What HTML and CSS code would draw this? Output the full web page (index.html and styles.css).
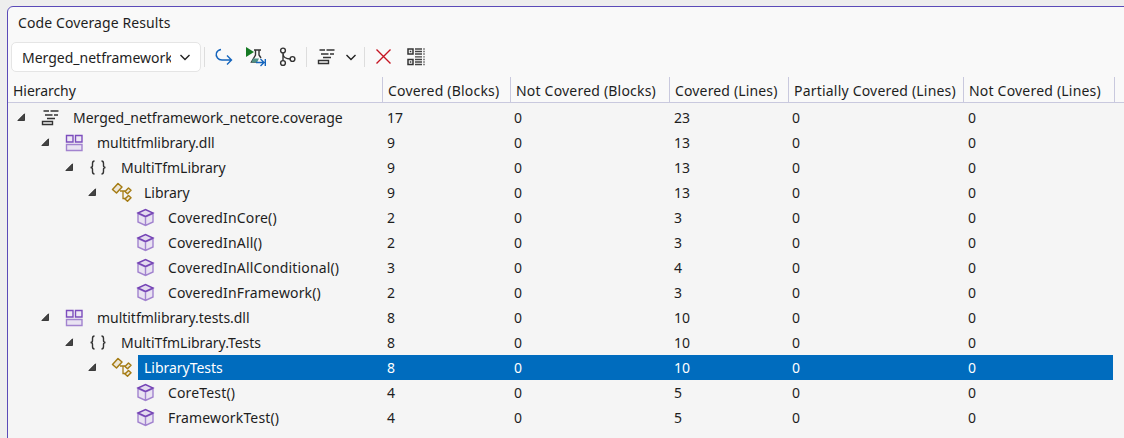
FILE: index.html
```html
<!DOCTYPE html>
<html lang="en">
<head>
<meta charset="utf-8">
<title>Code Coverage Results</title>
<link rel="stylesheet" href="styles.css">
</head>
<body>
<svg class="defs" width="0" height="0">
  <symbol id="report" viewBox="0 0 20 20"><path d="M3.500 3h5.500M10.500 3h8M5 7h7.500M14 7h4M7 10.500h8M2.500 13.500h10v3h-10z" fill="none" stroke="#333" stroke-width="1.400"/></symbol>
  <symbol id="module" viewBox="0 0 20 20"><path d="M2.500 2.500h6.500v6.500h-6.500zM11.500 2.500h6.500v6.500h-6.500z" fill="#eee9f5" stroke="#7c4dbd" stroke-width="1.400"/><path d="M2.500 11.500h15.500v6h-15.500z" fill="#e9e3f2" stroke="#a283cf" stroke-width="1.400"/></symbol>
  <symbol id="namespace" viewBox="0 0 20 20"><path d="M6.500 3C4.500 3 4.500 4 4.500 5.500V7.500Q4.500 9.500 2.500 9.500Q4.500 9.500 4.500 11.500V13.500C4.500 15 4.500 16 6.500 16M13.500 3C15.500 3 15.500 4 15.500 5.500V7.500Q15.500 9.500 17.500 9.500Q15.500 9.500 15.500 11.500V13.500C15.500 15 15.500 16 13.500 16" fill="none" stroke="#333" stroke-width="1.400"/></symbol>
  <symbol id="class" viewBox="0 0 20 20" overflow="visible"><path d="M9 8h5M12 8v7.500h3" fill="none" stroke="#a57c14" stroke-width="1.300"/><path d="M1.500 6.500l5.500-6 4 3.500-5.500 6zM14 8.500l3.500-3.500 2.500 2.200-3.500 3.500zM14 16l3.500-3.500 2.500 2.200-3.500 3.500z" fill="#eee7d8" stroke="#a57c14" stroke-width="1.500" stroke-linejoin="round"/></symbol>
  <symbol id="method" viewBox="0 0 20 20"><path d="M3 5.500l7.500 3.500 7.500-3.500v8.500l-7.500 3.500-7.500-3.500zM10.500 9v8.500" fill="#e9e3f2" stroke="#a283cf" stroke-width="1.400"/><path d="M3 5l7.500-3.500 7.500 3.500-7.500 3.500z" fill="#e4dbef" stroke="#7443b5" stroke-width="1.400"/></symbol>
</svg>
<main class="panel">
  <h1 class="title">Code Coverage Results</h1>
  <div class="toolbar">
    <div class="combo"><span class="combo-text">Merged_netframework</span><svg class="chevron" viewBox="0 0 12 12"><path d="M1.500 4l4.500 4.500 4.500-4.500" fill="none" stroke="#222" stroke-width="1.400"/></svg></div>
    <i class="sep sep-a"></i>
    <svg class="tool t-import" viewBox="0 0 20 20"><path d="M7 2.500C2 3.500 1 8 3.500 11Q5 13 8 13H17.500M13 8.500l4.500 4.500-4.500 4.500" fill="none" stroke="#1565bd" stroke-width="1.400"/></svg>
    <svg class="tool t-run" viewBox="0 0 20 20" overflow="visible"><path d="M8 3h7M9.500 3v5l-4 7h5M13 3v5l2 3" fill="none" stroke="#333" stroke-width="1.400"/><path d="M7 11.500h6l-2 4h-5.500z" fill="#4f9185"/><path d="M0 0v10l8-5z" fill="#167a24"/><path d="M10 15.500h8M14.500 12l3.500 3.500-3.500 3.500M19.300 12v7" fill="none" stroke="#1565bd" stroke-width="1.400"/></svg>
    <svg class="tool t-merge" viewBox="0 0 20 20"><g fill="#f9f9f9" stroke="#333" stroke-width="1.400"><path d="M5 5v9M5 6c0 5 3 6 8 6" fill="none"/><circle cx="5" cy="3.500" r="2.400"/><circle cx="5" cy="16" r="2.400"/><circle cx="14.500" cy="12" r="2.400"/></g></svg>
    <i class="sep sep-b"></i>
    <svg class="tool t-report"><use href="#report"/></svg>
    <svg class="chevron t-chevron" viewBox="0 0 12 12"><path d="M1.500 4l4.500 4.500 4.500-4.500" fill="none" stroke="#222" stroke-width="1.400"/></svg>
    <i class="sep sep-c"></i>
    <svg class="tool t-remove" viewBox="0 0 20 20"><path d="M3.500 2.500l14 14M17.500 2.500L3.500 16.500" fill="none" stroke="#c51422" stroke-width="1.400"/></svg>
    <svg class="tool t-columns" viewBox="0 0 20 20"><path d="M2 2h5v5h-5zM2 12.500h5v5h-5z" fill="none" stroke="#333" stroke-width="1.500"/><path d="M3.800 3.800h1.500v1.500h-1.500zM3.800 14.300h1.500v1.500h-1.500z" fill="#333"/><path d="M9 2h7M9 4.500h7M9 7h7M9 9.800h7M9 12.500h7M9 15h7M9 17.500h7" stroke="#444" stroke-width="1.300"/><path d="M17 2h2M17 4.500h2M17 7h2M17 9.800h2M17 12.500h2M17 15h2M17 17.500h2" stroke="#888" stroke-width="1.300"/></svg>
  </div>
  <div class="grid header"><span>Hierarchy</span><span>Covered (Blocks)</span><span>Not Covered (Blocks)</span><span>Covered (Lines)</span><span>Partially Covered (Lines)</span><span>Not Covered (Lines)</span></div>
  <div class="rows" id="rows"></div>
</main>
<script src="rows.js"></script>
</body>
</html>
```

FILE: styles.css
```css
* { box-sizing: border-box; }
body { margin: 0; height: 438px; overflow: hidden; padding: 6px 0 0 7px; background: #eee; color: #1e1e1e; font: 14px/20px "Noto Sans", "Open Sans", sans-serif; }
.defs { display: block; height: 0; }
.panel { height: 440px; width: 1125px; border: 1px solid #5b4bb8; border-radius: 6px 0 0 0; background: #f9f9f9; }
.title { margin: 0; height: 35px; padding: 5px 0 0 10px; font-size: 14px; line-height: 22px; font-weight: 400; letter-spacing: .1px; }
.toolbar { display: flex; height: 35px; align-items: flex-start; padding-left: 3px; }
.combo { display: flex; align-items: center; width: 190px; height: 30px; border: 1px solid #e5e5e5; border-radius: 5px; background: #fff; padding: 0 8px 0 10px; }
.combo-text { width: 149px; overflow: hidden; white-space: nowrap; flex: none; padding-top: 1px; }
.chevron { width: 12px; height: 12px; flex: none; }
.combo .chevron { margin-left: 8px; }
.sep { width: 1px; height: 20px; margin-top: 5px; background: #ddd; flex: none; }
.sep-a { margin-left: 3px; }
.tool { width: 20px; height: 20px; flex: none; margin-top: 5px; }
.t-import { margin-left: 9px; }
.t-run { margin-left: 12px; }
.t-merge { margin-left: 12px; }
.sep-b { margin-left: 8px; }
.t-report { margin-left: 9px; }
.t-chevron { margin: 9px 0 0 9px; }
.sep-c { margin-left: 7px; }
.t-remove { margin-left: 8px; }
.t-columns { margin-left: 13px; }
.grid { display: grid; grid-template-columns: 374px 127px 160px 118px 176px 1fr; }
.header { grid-template-columns: 375px 128px 159px 119px 175px 151px 1fr; height: 26px; border-bottom: 1px solid #c9c9de; }
.header span { border-right: 1px solid #c9c9de; padding: 4px 0 0 5px; white-space: nowrap; letter-spacing: .2px; }
.header span:first-child { letter-spacing: -.05px; }
.header span:nth-child(4) { letter-spacing: .15px; }
.rows { background: #f5f5f5; height: 340px; padding-top: 2px; }
.row { height: 25px; width: 1105px; }
.cell { padding-left: 5px; line-height: 25px; }
.name { display: flex; align-items: center; }
.name.l0 { padding-left: 9px; }
.name.l1 { padding-left: 33px; }
.name.l2 { padding-left: 57px; }
.name.l3 { padding-left: 80px; }
.name.l4 { padding-left: 104px; }
.twisty { width: 9px; height: 9px; flex: none; }
.icon { width: 20px; height: 20px; flex: none; margin-left: 14px; overflow: visible; }
.label { flex: 1; align-self: stretch; margin-left: 7px; padding-left: 6px; line-height: 25px; white-space: nowrap; letter-spacing: -.03px; }
.l4 .label { letter-spacing: .15px; }
.selected .label, .selected .value { background: #006cbe; color: #fff; }
```

FILE: rows.js
```js
const data = [
  [0, "report", "Merged_netframework_netcore.coverage", 17, 23],
  [1, "module", "multitfmlibrary.dll", 9, 13],
  [2, "namespace", "MultiTfmLibrary", 9, 13],
  [3, "class", "Library", 9, 13],
  [4, "method", "CoveredInCore()", 2, 3],
  [4, "method", "CoveredInAll()", 2, 3],
  [4, "method", "CoveredInAllConditional()", 3, 4],
  [4, "method", "CoveredInFramework()", 2, 3],
  [1, "module", "multitfmlibrary.tests.dll", 8, 10],
  [2, "namespace", "MultiTfmLibrary.Tests", 8, 10],
  [3, "class", "LibraryTests", 8, 10, true],
  [4, "method", "CoreTest()", 4, 5],
  [4, "method", "FrameworkTest()", 4, 5]
];
document.getElementById("rows").innerHTML = data.map(([level, icon, name, blocks, lines, selected]) => `
  <div class="grid row${selected ? " selected" : ""}">
    <div class="cell name l${level}"><svg class="twisty" viewBox="0 0 9 9">${level < 4 ? '<path d="M7.500 .8v6.700H.8z" fill="#444" stroke="#222" stroke-width=".8"/>' : ""}</svg><svg class="icon"><use href="#${icon}"/></svg><span class="label">${name}</span></div>
    ${[blocks, 0, lines, 0, 0].map(v => `<div class="cell value">${v}</div>`).join("")}
  </div>`).join("");
```
